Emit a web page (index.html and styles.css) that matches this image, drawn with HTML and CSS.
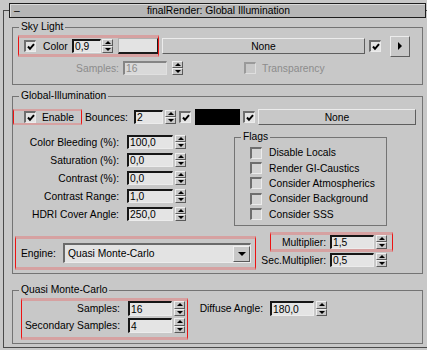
FILE: index.html
```html
<!DOCTYPE html>
<html lang="en">
<head>
  <meta charset="UTF-8" />
  <title>finalRender: Global Illumination</title>
  <link rel="stylesheet" href="styles.css">
</head>
<body>
  <div class="panel">
    <div class="titlebar">
      <span class="collapse">–</span>
      <span class="title">finalRender: Global Illumination</span>
    </div>

    <!-- Sky Light -->
    <div class="group sky">
      <div class="group-title">Sky Light</div>
      <div class="row sky-main">
        <div class="mark mark-color">
          <span class="chk on chk-color"><svg width="8" height="8" viewBox="0 0 8 8"><polyline points="1,3.5 3,5.8 7,1.2" /></svg></span>
          <span class="lbl lbl-color">Color</span>
          <span class="edit w29">0,9</span>
          <span class="spin sp1"><i class="up"></i><i class="down"></i></span>
          <span class="swatch swatch-light"></span>
        </div>
        <button class="btn none-sky">None</button>
        <span class="chk on chk-sky"><svg width="8" height="8" viewBox="0 0 8 8"><polyline points="1,3.5 3,5.8 7,1.2" /></svg></span>
        <button class="btn arrow-btn"><span class="tri-right"></span></button>
      </div>
      <div class="row sky-samples">
        <span class="lbl right dim w106">Samples:</span>
        <span class="edit off w44 ml4">16</span>
        <span class="spin ml5"><i class="up"></i><i class="down"></i></span>
        <span class="chk off chk-transp"></span>
        <span class="lbl dim ml6">Transparency</span>
      </div>
    </div>

    <!-- Global Illumination -->
    <div class="group gi">
      <div class="group-title">Global-Illumination</div>
      <div class="row gi-enable">
        <div class="mark mark-enable">
          <span class="chk on chk-enable"><svg width="8" height="8" viewBox="0 0 8 8"><polyline points="1,3.5 3,5.8 7,1.2" /></svg></span>
          <span class="lbl ml6">Enable</span>
        </div>
        <span class="lbl lbl-bounces">Bounces:</span>
        <span class="edit w29">2</span>
        <span class="spin ml2"><i class="up"></i><i class="down"></i></span>
        <span class="chk on ml3"><svg width="8" height="8" viewBox="0 0 8 8"><polyline points="1,3.5 3,5.8 7,1.2" /></svg></span>
        <span class="swatch swatch-black"></span>
        <span class="chk on ml3"><svg width="8" height="8" viewBox="0 0 8 8"><polyline points="1,3.5 3,5.8 7,1.2" /></svg></span>
        <button class="btn none-gi">None</button>
      </div>

      <div class="gi-body">
        <div class="gi-params">
          <div class="srow"><span class="lbl right w106">Color Bleeding (%):</span><span class="edit w46 ml8">100,0</span><span class="spin ml2"><i class="up"></i><i class="down"></i></span></div>
          <div class="srow"><span class="lbl right w106">Saturation (%):</span><span class="edit w46 ml8">0,0</span><span class="spin ml2"><i class="up"></i><i class="down"></i></span></div>
          <div class="srow"><span class="lbl right w106">Contrast (%):</span><span class="edit w46 ml8">0,0</span><span class="spin ml2"><i class="up"></i><i class="down"></i></span></div>
          <div class="srow"><span class="lbl right w106">Contrast Range:</span><span class="edit w46 ml8">1,0</span><span class="spin ml2"><i class="up"></i><i class="down"></i></span></div>
          <div class="srow"><span class="lbl right w106">HDRI Cover Angle:</span><span class="edit w46 ml8">250,0</span><span class="spin ml2"><i class="up"></i><i class="down"></i></span></div>
        </div>
        <div class="group flags">
          <div class="group-title">Flags</div>
          <div class="frow first"><span class="chk"></span><span class="lbl ml7">Disable Locals</span></div>
          <div class="frow"><span class="chk"></span><span class="lbl ml7">Render GI-Caustics</span></div>
          <div class="frow"><span class="chk"></span><span class="lbl ml7">Consider Atmospherics</span></div>
          <div class="frow"><span class="chk"></span><span class="lbl ml7">Consider Background</span></div>
          <div class="frow"><span class="chk"></span><span class="lbl ml7">Consider SSS</span></div>
        </div>
      </div>

      <div class="gi-bottom">
        <div class="mark mark-engine">
          <span class="lbl lbl-engine">Engine:</span>
          <div class="combo">
            <span class="combo-text">Quasi Monte-Carlo</span>
            <span class="combo-btn"></span>
          </div>
        </div>
        <div class="mult-col">
          <div class="mark mark-mult">
            <span class="lbl right w55">Multiplier:</span>
            <span class="edit w44 ml4">1,5</span>
            <span class="spin ml2"><i class="up"></i><i class="down"></i></span>
          </div>
          <div class="srow sec-row">
            <span class="lbl right w67">Sec.Multiplier:</span>
            <span class="edit w44 ml4">0,5</span>
            <span class="spin ml2"><i class="up"></i><i class="down"></i></span>
          </div>
        </div>
      </div>
    </div>

    <!-- Quasi Monte-Carlo -->
    <div class="group qmc">
      <div class="group-title">Quasi Monte-Carlo</div>
      <div class="qmc-body">
        <div class="mark mark-qmc">
          <div class="qrow"><span class="lbl right w98">Samples:</span><span class="edit w44 ml8">16</span><span class="spin ml2 tall"><i class="up"></i><i class="down"></i></span></div>
          <div class="qrow"><span class="lbl right w98">Secondary Samples:</span><span class="edit w44 ml8">4</span><span class="spin ml2 tall"><i class="up"></i><i class="down"></i></span></div>
        </div>
        <div class="qrow diffuse">
          <span class="lbl right w66">Diffuse Angle:</span>
          <span class="edit w44 ml7">180,0</span>
          <span class="spin ml2 tall"><i class="up"></i><i class="down"></i></span>
        </div>
      </div>
    </div>
  </div>
</body>
</html>
```

FILE: styles.css
```css
* {
  box-sizing: border-box;
}
body {
  margin: 0;
  width: 427px;
  height: 350px;
  overflow: hidden;
  background-color: #c8c8c8;
  font-family: "Liberation Sans", Arial, sans-serif;
  font-size: 10.3px;
  color: #000;
}

/* rollout frame */
.panel {
  margin: 10px 0 0 3px;
  width: 426px;
  height: 338px;
  border: 1px solid #4a4a4a;
}
.titlebar {
  display: flex;
  align-items: center;
  margin: -8px 0 0 5px;
  width: 417px;
  height: 15px;
  border: 1px solid #1e1e1e;
  background-color: #b6b6b6;
  box-shadow: inset 1px 1px 0 #dadada;
}
.collapse {
  width: 14px;
  padding-left: 4px;
}
.title {
  flex: 1;
  text-align: center;
  padding-right: 12px;
}

/* group boxes */
.group {
  border: 1px solid #747474;
}
.group-title {
  display: table;
  margin: -7px 0 0 6px;
  padding: 0 2px;
  line-height: 12px;
  background-color: #c8c8c8;
}
.sky, .gi, .qmc {
  margin-left: 8px;
  width: 411px;
}
.sky {
  margin-top: 9px;
  height: 58px;
}
.gi {
  margin-top: 11px;
  height: 178px;
}
.qmc {
  margin-top: 16px;
  height: 54px;
}

.row {
  display: flex;
  align-items: center;
}
.lbl {
  white-space: nowrap;
  flex: none;
}
.right {
  text-align: right;
}
.dim {
  color: #8c8c8c;
}

/* widths / spacing helpers */
.w29 { width: 29px; }
.w44 { width: 44px; }
.w46 { width: 46px; }
.w55 { width: 55px; }
.w66 { width: 66px; }
.w67 { width: 67px; }
.w98 { width: 98px; }
.w106 { width: 106px; }
.ml2 { margin-left: 2px; }
.ml3 { margin-left: 3px; }
.ml4 { margin-left: 4px; }
.ml5 { margin-left: 5px; }
.ml6 { margin-left: 6px; }
.ml7 { margin-left: 7px; }
.ml8 { margin-left: 8px; }

/* red highlight marks */
.mark {
  display: flex;
  align-items: center;
  flex: none;
  border-style: solid;
  border-color: #d6a1a1 #ec1313;
  border-width: 3px 1px;
}
.mark-color {
  margin-left: 5px;
  width: 141px;
  height: 22px;
}
.mark-enable {
  width: 69px;
  height: 16px;
  border-width: 2px 1px;
}
.mark-engine {
  margin: 4px 0 0 2px;
  width: 241px;
  height: 34px;
}
.mark-mult {
  margin-left: 11px;
  width: 123px;
  height: 20px;
}
.mark-qmc {
  flex-direction: column;
  align-items: stretch;
  margin: 2px 0 0 8px;
  width: 167px;
  height: 42px;
}

/* controls */
.edit {
  display: flex;
  align-items: center;
  flex: none;
  height: 14px;
  padding-left: 1px;
  border-style: solid;
  border-width: 2px 1px 1px 2px;
  border-color: #161616 #ececec #ececec #161616;
  background-color: #e4e4e4;
}
.edit.off {
  border-color: #858585 #e0e0e0 #e0e0e0 #858585;
  background-color: #d9d9d9;
  color: #8c8c8c;
}
.spin {
  display: flex;
  flex-direction: column;
  flex: none;
  width: 11px;
  height: 14px;
}
.spin.tall {
  height: 15px;
}
.spin i {
  flex: 1;
  display: flex;
  align-items: center;
  justify-content: center;
  border: 1px solid;
  border-color: #efefef #5a5a5a #5a5a5a #efefef;
}
.spin i::after {
  content: "";
  border-left: 3px solid transparent;
  border-right: 3px solid transparent;
}
.spin .up::after {
  border-bottom: 3px solid #000;
}
.spin .down::after {
  border-top: 3px solid #000;
}
.sp1 {
  margin-left: 1px;
}

.chk {
  display: flex;
  align-items: center;
  justify-content: center;
  flex: none;
  width: 12px;
  height: 12px;
  border-style: solid;
  border-width: 2px 1px 1px 2px;
  border-color: #6e6e6e #ececec #ececec #6e6e6e;
  background-color: #d4d4d4;
}
.chk.on {
  background-color: #e4e4e4;
}
.chk.off {
  border-color: #9a9a9a #dedede #dedede #9a9a9a;
  background-color: #c8c8c8;
}
.chk svg polyline {
  fill: none;
  stroke: #000;
  stroke-width: 2;
}
.chk-color {
  margin-left: 5px;
}
.chk-sky {
  margin-left: 4px;
}
.chk-transp {
  margin-left: 61px;
}
.chk-enable {
  margin-left: 10px;
}

.lbl-color {
  margin-left: 7px;
  width: 29px;
}
.swatch {
  flex: none;
  height: 16px;
}
.swatch-light {
  margin-left: 5px;
  width: 40px;
  border-style: solid;
  border-width: 1px 1px 2px 1px;
  border-color: #b0b0b0 #1a1a1a #1a1a1a #b0b0b0;
  background-color: #e3e3e3;
}
.swatch-black {
  margin-left: 4px;
  width: 45px;
  background-color: #000;
}

.btn {
  display: flex;
  align-items: center;
  justify-content: center;
  flex: none;
  padding: 0;
  font: inherit;
  color: #000;
  border: 1px solid;
  border-color: #ececec #5e5e5e #5e5e5e #ececec;
  background-color: #c8c8c8;
}
.none-sky {
  margin-left: 3px;
  width: 203px;
  height: 16px;
}
.none-gi {
  margin-left: 3px;
  width: 158px;
  height: 16px;
}
.arrow-btn {
  margin-left: 9px;
  width: 20px;
  height: 21px;
}
.tri-right {
  border-left: 4px solid #000;
  border-top: 4px solid transparent;
  border-bottom: 4px solid transparent;
}

/* sky light rows */
.sky-main {
  margin-top: 2px;
  height: 22px;
}
.sky-samples {
  margin-top: 4px;
  height: 14px;
}

/* global illumination rows */
.gi-enable {
  margin-top: 6px;
  height: 18px;
}
.lbl-bounces {
  margin-left: 3px;
  width: 49px;
}
.gi-body {
  display: flex;
  align-items: flex-start;
  margin-top: 9px;
}
.srow {
  display: flex;
  align-items: center;
  height: 14px;
  margin-bottom: 4px;
}
.flags {
  margin: 2px 0 0 48px;
  width: 153px;
  height: 89px;
}
.frow {
  display: flex;
  align-items: center;
  height: 15.4px;
  padding-left: 15px;
}
.frow.first {
  margin-top: 2px;
}
.gi-bottom {
  display: flex;
  align-items: flex-start;
  margin-top: 6px;
}
.lbl-engine {
  margin-left: 5px;
  width: 42px;
}
.combo {
  display: flex;
  align-items: center;
  width: 188px;
  height: 20px;
  padding-left: 3px;
  border-style: solid;
  border-width: 2px 1px 1px 2px;
  border-color: #6a6a6a #ececec #ececec #6a6a6a;
  background-color: #e3e3e3;
}
.combo-text {
  flex: 1;
}
.combo-btn {
  display: flex;
  align-items: center;
  justify-content: center;
  width: 17px;
  height: 16px;
  border: 1px solid;
  border-color: #f0f0f0 #5a5a5a #5a5a5a #f0f0f0;
  background-color: #c8c8c8;
}
.combo-btn::after {
  content: "";
  border-top: 4px solid #000;
  border-left: 4px solid transparent;
  border-right: 4px solid transparent;
}
.mult-col {
  margin-left: 3px;
  width: 134px;
}
.sec-row {
  margin: 1px 0 0;
}

/* quasi monte-carlo */
.qmc-body {
  display: flex;
  align-items: flex-start;
}
.qrow {
  display: flex;
  align-items: center;
  height: 15px;
}
.qrow .edit {
  height: 15px;
}
.mark-qmc .qrow + .qrow {
  margin-top: 2px;
}
.diffuse {
  margin: 5px 0 0 9px;
}
```
